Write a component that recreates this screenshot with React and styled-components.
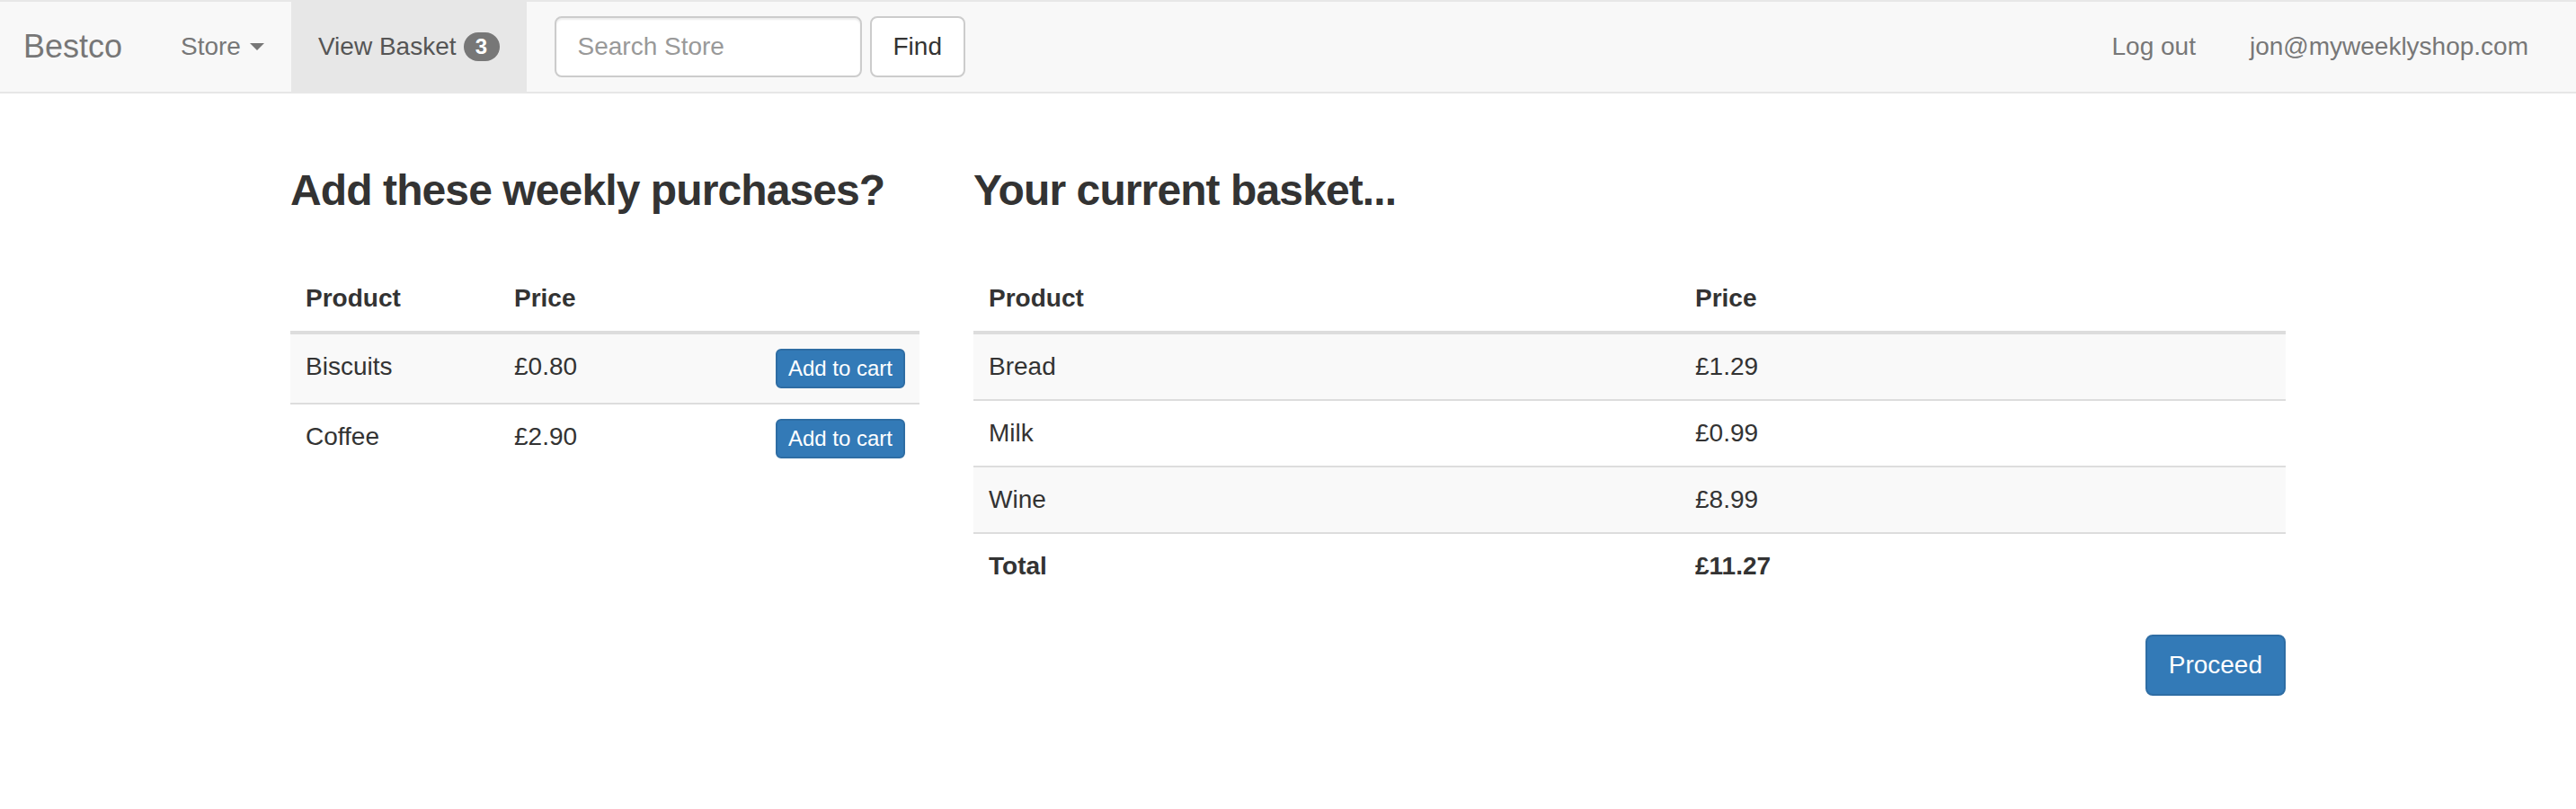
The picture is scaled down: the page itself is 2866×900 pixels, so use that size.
import React from "react";
import styled, { createGlobalStyle } from "styled-components";

const GlobalStyle = createGlobalStyle`
  html, body {
    margin: 0;
    padding: 0;
    background: #ffffff;
  }
  body {
    font-family: "Liberation Sans", Helvetica, Arial, sans-serif;
    font-size: 28px;
    line-height: 40px;
    color: #333333;
  }
  * { box-sizing: border-box; }
`;

const Navbar = styled.nav`
  display: flex;
  align-items: center;
  height: 104px;
  background: #f8f8f8;
  border-top: 2px solid #e7e7e7;
  border-bottom: 2px solid #e7e7e7;
  margin-bottom: 40px;
`;

const Brand = styled.a`
  display: flex;
  align-items: center;
  width: 171px;
  height: 100px;
  padding-left: 26px;
  font-size: 36px;
  color: #777777;
  text-decoration: none;
`;

const NavList = styled.div`
  display: flex;
  align-items: center;
  margin-left: ${(p) => (p.$right ? "auto" : "0")};
  padding-right: ${(p) => (p.$right ? "23px" : "0")};
`;

const NavLink = styled.a`
  display: flex;
  align-items: center;
  height: 100px;
  padding: 0 30px;
  font-size: 28px;
  color: ${(p) => (p.$active ? "#555555" : "#777777")};
  background: ${(p) => (p.$active ? "#e7e7e7" : "transparent")};
  text-decoration: none;
  white-space: nowrap;
`;

const Caret = styled.span`
  display: inline-block;
  width: 0;
  height: 0;
  margin-left: 10px;
  border-top: 8px solid #777777;
  border-left: 8px solid transparent;
  border-right: 8px solid transparent;
`;

const Badge = styled.span`
  display: inline-flex;
  align-items: center;
  justify-content: center;
  min-width: 40px;
  height: 32px;
  margin-left: 8px;
  padding: 0 12px;
  border-radius: 16px;
  background: #777777;
  color: #ffffff;
  font-size: 24px;
  font-weight: 700;
  line-height: 1;
`;

const SearchForm = styled.form`
  display: flex;
  align-items: center;
  gap: 9px;
  margin: 0 0 0 31px;
`;

const SearchInput = styled.input`
  width: 342px;
  height: 68px;
  padding: 12px 24px;
  font-family: inherit;
  font-size: 28px;
  color: #555555;
  background: #ffffff;
  border: 2px solid #cccccc;
  border-radius: 8px;
  box-shadow: inset 0 2px 2px rgba(0, 0, 0, 0.075);
  outline: none;
  &::placeholder {
    color: #999999;
  }
`;

const Button = styled.button`
  display: inline-block;
  font-family: inherit;
  font-size: ${(p) => (p.$small ? "24px" : "28px")};
  line-height: ${(p) => (p.$small ? "36px" : "40px")};
  padding: ${(p) => (p.$small ? "2px 12px" : "12px 24px")};
  border-radius: ${(p) => (p.$small ? "6px" : "8px")};
  border: 2px solid ${(p) => (p.$primary ? "#2e6da4" : "#cccccc")};
  background: ${(p) => (p.$primary ? "#337ab7" : "#ffffff")};
  color: ${(p) => (p.$primary ? "#ffffff" : "#333333")};
  white-space: nowrap;
  cursor: pointer;
  float: ${(p) => (p.$float ? "right" : "none")};
`;

const Container = styled.main`
  width: 2220px;
  margin: 0 auto;
  display: grid;
  grid-template-columns: 700px 1fr;
  column-gap: 60px;
`;

const Column = styled.section`
  min-width: 0;
`;

const Heading = styled.h3`
  margin: 42px 0 57px;
  font-size: 48px;
  line-height: 52.8px;
  font-weight: 700;
  letter-spacing: -0.9px;
  color: #333333;
`;

const Table = styled.table`
  width: 100%;
  border-collapse: collapse;
  border-spacing: 0;
  margin-bottom: 40px;
`;

const Th = styled.th`
  text-align: left;
  font-weight: 700;
  padding: 16px 16px 16px 17px;
  line-height: 40px;
  vertical-align: bottom;
  border-bottom: 4px solid #dddddd;
  width: ${(p) => p.$w || "auto"};
`;

const Row = styled.tr`
  background: ${(p) => (p.$striped ? "#f9f9f9" : "transparent")};
`;

const Td = styled.td`
  padding: 16px 16px 16px 17px;
  line-height: 40px;
  vertical-align: top;
  border-top: 2px solid #dddddd;
  font-weight: ${(p) => (p.$bold ? 700 : 400)};
`;

const Actions = styled.div`
  display: flex;
  justify-content: flex-end;
`;

const suggestions = [
  { name: "Biscuits", price: "£0.80" },
  { name: "Coffee", price: "£2.90" },
];

const basket = [
  { name: "Bread", price: "£1.29" },
  { name: "Milk", price: "£0.99" },
  { name: "Wine", price: "£8.99" },
];

export default function App() {
  return (
    <>
      <GlobalStyle />
      <Navbar>
        <Brand href="#">Bestco</Brand>
        <NavList>
          <NavLink href="#">
            Store
            <Caret />
          </NavLink>
          <NavLink href="#" $active>
            View Basket
            <Badge>3</Badge>
          </NavLink>
        </NavList>
        <SearchForm onSubmit={(e) => e.preventDefault()}>
          <SearchInput type="text" placeholder="Search Store" />
          <Button type="submit">Find</Button>
        </SearchForm>
        <NavList $right>
          <NavLink href="#">Log out</NavLink>
          <NavLink href="#">jon@myweeklyshop.com</NavLink>
        </NavList>
      </Navbar>

      <Container>
        <Column>
          <Heading>Add these weekly purchases?</Heading>
          <Table>
            <thead>
              <tr>
                <Th $w="232px">Product</Th>
                <Th $w="250px">Price</Th>
                <Th />
              </tr>
            </thead>
            <tbody>
              {suggestions.map((item, i) => (
                <Row key={item.name} $striped={i % 2 === 0}>
                  <Td>{item.name}</Td>
                  <Td>{item.price}</Td>
                  <Td>
                    <Button $primary $small $float>
                      Add to cart
                    </Button>
                  </Td>
                </Row>
              ))}
            </tbody>
          </Table>
        </Column>

        <Column>
          <Heading>Your current basket...</Heading>
          <Table>
            <thead>
              <tr>
                <Th $w="786px">Product</Th>
                <Th>Price</Th>
              </tr>
            </thead>
            <tbody>
              {basket.map((item, i) => (
                <Row key={item.name} $striped={i % 2 === 0}>
                  <Td>{item.name}</Td>
                  <Td>{item.price}</Td>
                </Row>
              ))}
              <Row>
                <Td $bold>Total</Td>
                <Td $bold>£11.27</Td>
              </Row>
            </tbody>
          </Table>
          <Actions>
            <Button $primary>Proceed</Button>
          </Actions>
        </Column>
      </Container>
    </>
  );
}
